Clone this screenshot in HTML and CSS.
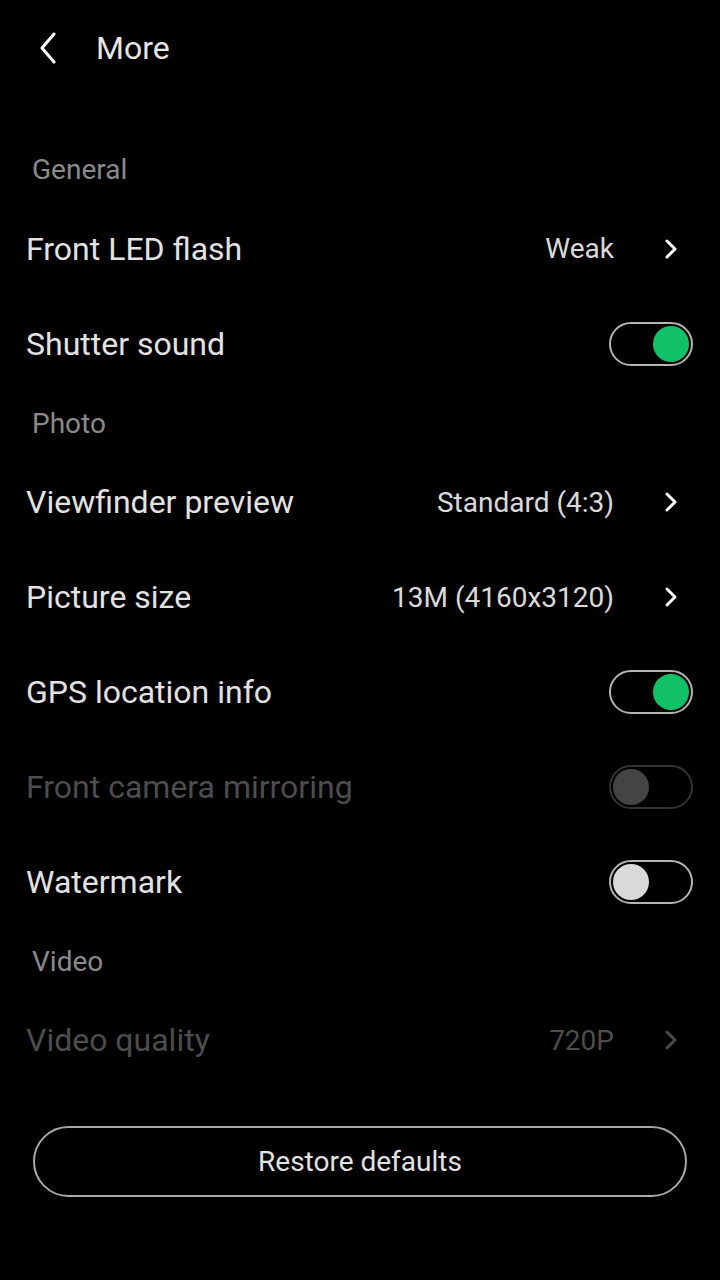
FILE: index.html
```html
<!DOCTYPE html>
<html lang="en">
<head>
  <meta charset="UTF-8" />
  <meta name="viewport" content="width=device-width, initial-scale=1.0" />
  <title>More</title>
  <link rel="stylesheet" href="styles.css">
</head>
<body>
  <div class="topbar">
    <svg class="back" width="20" height="32" viewBox="0 0 20 32">
      <polyline points="16,2 4,16 16,30" fill="none" stroke="#fff" stroke-width="3" stroke-linecap="round" stroke-linejoin="round"/>
    </svg>
    <span class="title">More</span>
  </div>

  <div class="list">
    <div class="section first">General</div>
    <div class="row">
      <span class="label">Front LED flash</span>
      <span class="value">Weak</span>
      <svg class="chev" width="14" height="22" viewBox="0 0 14 22"><polyline points="3,3 11,11 3,19" fill="none" stroke="#fff" stroke-width="3" stroke-linecap="round" stroke-linejoin="round"/></svg>
    </div>
    <div class="row">
      <span class="label">Shutter sound</span>
      <span class="switch on"><span class="knob"></span></span>
    </div>

    <div class="section">Photo</div>
    <div class="row">
      <span class="label">Viewfinder preview</span>
      <span class="value">Standard (4:3)</span>
      <svg class="chev" width="14" height="22" viewBox="0 0 14 22"><polyline points="3,3 11,11 3,19" fill="none" stroke="#fff" stroke-width="3" stroke-linecap="round" stroke-linejoin="round"/></svg>
    </div>
    <div class="row">
      <span class="label">Picture size</span>
      <span class="value">13M (4160x3120)</span>
      <svg class="chev" width="14" height="22" viewBox="0 0 14 22"><polyline points="3,3 11,11 3,19" fill="none" stroke="#fff" stroke-width="3" stroke-linecap="round" stroke-linejoin="round"/></svg>
    </div>
    <div class="row">
      <span class="label">GPS location info</span>
      <span class="switch on"><span class="knob"></span></span>
    </div>
    <div class="row disabled">
      <span class="label">Front camera mirroring</span>
      <span class="switch"><span class="knob"></span></span>
    </div>
    <div class="row">
      <span class="label">Watermark</span>
      <span class="switch"><span class="knob"></span></span>
    </div>

    <div class="section">Video</div>
    <div class="row disabled">
      <span class="label">Video quality</span>
      <span class="value">720P</span>
      <svg class="chev" width="14" height="22" viewBox="0 0 14 22"><polyline points="3,3 11,11 3,19" fill="none" stroke="#4a4a4a" stroke-width="3" stroke-linecap="round" stroke-linejoin="round"/></svg>
    </div>
  </div>

  <button class="restore">Restore defaults</button>
</body>
</html>
```

FILE: styles.css
```css
body {
  margin: 0;
  background: #000;
  color: #e2e2e2;
  font-family: Roboto, 'Noto Sans', sans-serif;
}
.topbar {
  height: 96px;
  display: flex;
  align-items: center;
  padding-left: 38px;
}
.back {
  margin-right: 38px;
}
.title {
  font-size: 32px;
  color: #e6e6e6;
}
.section {
  height: 64px;
  display: flex;
  align-items: center;
  padding-left: 32px;
  font-size: 28px;
  color: #8a8a8a;
}
.section.first {
  margin-top: 41.5px;
}
.row {
  height: 94.8px;
  display: flex;
  align-items: center;
  padding: 0 27px 0 26px;
}
.label {
  flex: 1;
  font-size: 32px;
}
.value {
  font-size: 28px;
  color: #dadada;
  margin-right: 50px;
}
.chev {
  margin-right: 15px;
}
.row.disabled .label,
.row.disabled .value {
  color: #4d4d4d;
}
.switch {
  box-sizing: border-box;
  width: 84px;
  height: 44px;
  border: 2px solid #b4b4b4;
  border-radius: 22px;
  display: flex;
  align-items: center;
  padding: 0 2px;
}
.knob {
  width: 36px;
  height: 36px;
  border-radius: 50%;
  background: #d9d9d9;
}
.switch.on {
  justify-content: flex-end;
}
.switch.on .knob {
  background: #10c167;
}
.row.disabled .switch {
  border-color: #333;
}
.row.disabled .knob {
  background: #444;
}
.restore {
  display: block;
  box-sizing: border-box;
  width: 654px;
  height: 71px;
  margin: 38px auto 0;
  background: #000;
  border: 2px solid #a8a8a8;
  border-radius: 36px;
  color: #e2e2e2;
  font-family: Roboto, 'Noto Sans', sans-serif;
  font-size: 28px;
}
```
